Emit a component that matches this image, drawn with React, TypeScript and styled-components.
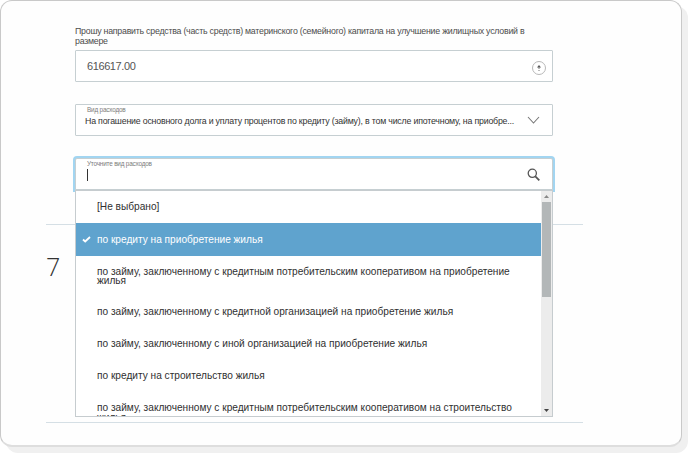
import React from "react";
import styled, { createGlobalStyle } from "styled-components";

type Option = {
  label: string;
  selected?: boolean;
  tall?: boolean;
};

const options: Option[] = [
  { label: "[Не выбрано]" },
  { label: "по кредиту на приобретение жилья", selected: true },
  {
    label:
      "по займу, заключенному с кредитным потребительским кооперативом на приобретение жилья",
    tall: true,
  },
  {
    label:
      "по займу, заключенному с кредитной организацией на приобретение жилья",
  },
  { label: "по займу, заключенному с иной организацией на приобретение жилья" },
  { label: "по кредиту на строительство жилья" },
  {
    label:
      "по займу, заключенному с кредитным потребительским кооперативом на строительство жилья",
    tall: true,
  },
];

const GlobalStyle = createGlobalStyle`
  * {
    box-sizing: border-box;
  }
  body {
    height: 453px;
    margin: 0;
    background: #fff;
    color: #333;
    font-family: "Liberation Sans", Arial, sans-serif;
  }
`;

const Page = styled("div")`
  height: 453px;
  overflow: hidden;
`;

const Card = styled("main")`
  width: 682px;
  height: 447px;
  padding: 25px 0 0 45px;
  background: #fefefe;
  border: 1px solid #c9c9c9;
  border-bottom: 2px solid #dedede;
  border-radius: 12px;
  box-shadow: 6px 6px 0 #f0f0f0;
`;

const Form = styled("div")`
  width: 478px;
  margin-left: 29px;
`;

const Label = styled("div")`
  height: 24px;
  color: #4c4c4c;
  font-size: 8.8px;
  letter-spacing: -0.24px;
  line-height: 10px;
  white-space: nowrap;
`;

const Field = styled("div")<{ $focused?: boolean }>`
  position: relative;
  display: flex;
  align-items: center;
  justify-content: space-between;
  height: 32px;
  padding: 0 12px 0 11px;
  background: #fff;
  border: 1px solid #c6cfd2;
  border-radius: ${(props) => (props.$focused ? "2px 2px 0 0" : "1px")};
  box-shadow: ${(props) => (props.$focused ? "0 0 0 2px #a2d5f1" : "none")};
  & + & {
    margin-top: 22px;
  }
  > svg {
    flex: none;
  }
`;

const Amount = styled("span")`
  color: #555;
  font-size: 11px;
  letter-spacing: -0.4px;
`;

const Caption = styled("span")`
  position: absolute;
  top: 1px;
  left: 11px;
  color: #7c7c7c;
  font-size: 6.4px;
  letter-spacing: -0.2px;
  line-height: 7px;
  white-space: nowrap;
`;

const Value = styled("span")`
  margin: 1px 0 0 -2px;
  font-size: 8.8px;
  letter-spacing: -0.2px;
  line-height: 12px;
  white-space: nowrap;
`;

const Caret = styled("span")`
  width: 1px;
  height: 12px;
  margin-top: 1px;
  background: #333;
`;

const Hint = styled("span")`
  display: flex;
  align-items: center;
  justify-content: center;
  width: 14px;
  height: 14px;
  margin: 3px -6px 0 0;
  border: 1px solid #b8b8b8;
  border-radius: 50%;
`;

const Menu = styled("div")`
  position: absolute;
  z-index: 1;
  top: 31px;
  left: -1px;
  display: flex;
  width: 478px;
  height: 227px;
  background: #fff;
  border: 1px solid #c6cccf;
`;

const List = styled("div")`
  flex: 1;
  overflow: hidden;
`;

const Item = styled("div")<{ $selected?: boolean; $tall?: boolean }>`
  display: flex;
  align-items: ${(props) => (props.$tall ? "flex-start" : "center")};
  height: ${(props) => (props.$tall ? "39.7px" : "32.3px")};
  padding: ${(props) => (props.$tall ? "11px" : "0")} 20px 0 0;
  color: ${(props) => (props.$selected ? "#fff" : "#303030")};
  background: ${(props) => (props.$selected ? "#5fa3ce" : "transparent")};
  font-size: 10.15px;
  line-height: 9.7px;
`;

const Mark = styled("span")`
  display: flex;
  flex: none;
  width: 21px;
  padding-left: 6px;
`;

const Scrollbar = styled("div")`
  display: flex;
  flex-direction: column;
  align-items: center;
  width: 11px;
  padding: 4px 0;
  background: #ececec;
`;

const Thumb = styled("div")`
  width: 9px;
  height: 95px;
  margin: 4px 0 auto;
  background: #b3b7b8;
`;

const Section = styled("section")`
  width: 537px;
  height: 199px;
  margin-top: 34px;
  border: solid #d5dfe5;
  border-width: 1px 0;
`;

const Number = styled("div")`
  padding-top: 25px;
  color: #333;
  font-family: "Open Sans", sans-serif;
  font-size: 25px;
  font-weight: 300;
  line-height: 32px;
`;

const App = () => {
  return (
    <Page>
      <GlobalStyle />
      <Card>
        <Form>
          <Label>
            Прошу направить средства (часть средств) материнского (семейного)
            капитала на улучшение жилищных условий в
            <br />
            размере
          </Label>
          <Field>
            <Amount>616617.00</Amount>
            <Hint>
              <svg width="6" height="8" viewBox="0 0 6 8">
                <path d="M1 3.5 3 1l2 2.5Z" fill="#555" />
                <path d="M3 3v2M3 6v1" stroke="#777" />
              </svg>
            </Hint>
          </Field>
          <Field>
            <Caption>Вид расходов</Caption>
            <Value>
              На погашение основного долга и уплату процентов по кредиту
              (займу), в том числе ипотечному, на приобре...
            </Value>
            <svg width="13" height="8" viewBox="0 0 13 8" fill="none">
              <path d="m1 1 5.5 6L12 1" stroke="#777" strokeWidth="1.1" />
            </svg>
          </Field>
          <Field $focused>
            <Caption>Уточните вид расходов</Caption>
            <Caret />
            <svg width="13" height="13" viewBox="0 0 13 13" fill="none">
              <circle cx="5.3" cy="5.3" r="4.1" stroke="#555" strokeWidth="1.3" />
              <path d="m8.3 8.3 4 4" stroke="#555" strokeWidth="1.8" />
            </svg>
            <Menu>
              <List>
                {options.map((option) => (
                  <Item
                    key={option.label}
                    $selected={option.selected}
                    $tall={option.tall}
                  >
                    <Mark>
                      {option.selected && (
                        <svg width="9" height="7" viewBox="0 0 9 7" fill="none">
                          <path
                            d="m1 3.5 2.2 2L8 1"
                            stroke="#fff"
                            strokeWidth="1.8"
                          />
                        </svg>
                      )}
                    </Mark>
                    <span>{option.label}</span>
                  </Item>
                ))}
              </List>
              <Scrollbar>
                <svg width="5" height="3" viewBox="0 0 5 3">
                  <path d="M0 3 2.5 0 5 3Z" fill="#888" />
                </svg>
                <Thumb />
                <svg width="5" height="3" viewBox="0 0 5 3">
                  <path d="m0 0 2.5 3L5 0Z" fill="#444" />
                </svg>
              </Scrollbar>
            </Menu>
          </Field>
        </Form>
        <Section>
          <Number>7</Number>
        </Section>
      </Card>
    </Page>
  );
};

export default App;
